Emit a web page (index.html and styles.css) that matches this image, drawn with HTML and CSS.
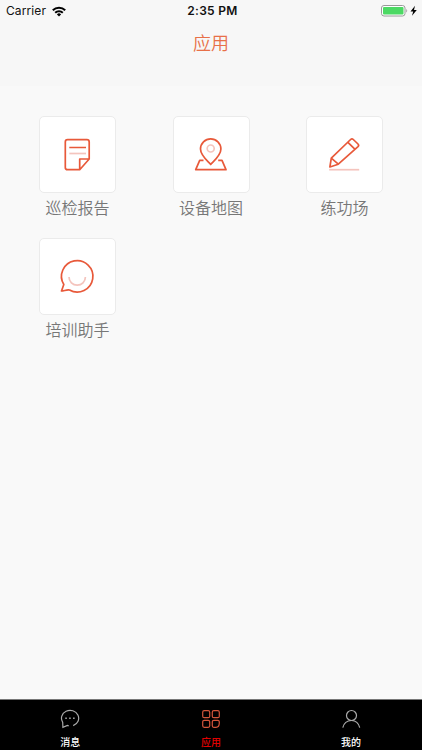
FILE: index.html
```html
<!DOCTYPE html>
<html lang="zh-CN">
<head>
<meta charset="utf-8">
<title>应用</title>
<link rel="stylesheet" href="styles.css">
</head>
<body>
<header class="header">
  <div class="status">
    <div class="carrier">Carrier
      <svg width="14" height="11" viewBox="0 0 14 11" fill="none" stroke="#000" stroke-width="2"><path d="M.8 4.2a8.8 8.8 0 0 1 12.4 0M3.2 6.7a5.4 5.4 0 0 1 7.6 0"/><path d="M7 10.5 4.9 8.4a3 3 0 0 1 4.2 0z" fill="#000" stroke="none"/></svg>
    </div>
    <div class="time">2:35 PM</div>
    <div class="power">
      <svg width="37" height="12" viewBox="0 0 37 12"><rect x=".5" y=".5" width="23.5" height="10.5" rx="2.5" fill="#fff" stroke="#999"/><rect x="2" y="2" width="20.5" height="7.5" rx="1" fill="#4cd964"/><path d="M25.3 4c1.2.5 1.2 3 0 3.5z" fill="#999"/><path d="M34 .8 29.5 6.4h2.7L31 10.8l4.8-5.9H33z"/></svg>
    </div>
  </div>
  <h1 class="title">应用</h1>
</header>
<main class="apps">
  <div class="app">
    <div class="card"><svg class="icon" viewBox="1 1 75 75"><path d="M50.2 43V26q0-2.3-2.3-2.3H28.6q-2.3 0-2.3 2.3v25.4q0 2.3 2.3 2.3h12.1L50.2 43h-9.5v10.7M30.3 31.5H47"/><path class="soft" d="M30.3 37.5H47"/></svg></div>
    <span class="label">巡检报告</span>
  </div>
  <div class="app">
    <div class="card"><svg class="icon" viewBox="1 1 75 75"><path d="M37.7 48.5C33 43.5 27.5 39 27.5 33a10.2 10.2 0 0 1 20.4 0c0 6-5.5 10.5-10.2 15.5zM30.5 44.3h-3.8l-4 9.4h30.3l-4-9.4h-3.8"/><circle class="soft" cx="37.7" cy="32.5" r="3.5"/></svg></div>
    <span class="label">设备地图</span>
  </div>
  <div class="app">
    <div class="card"><svg class="icon" viewBox="1 1 75 75"><path d="M23.9 51 25.3 42.2 44.6 23.5q1.4-1.3 2.7 0l4.7 4.5q1.3 1.3 0 2.6L32.3 48.2zM25.3 42.2l7 6M41.9 26.3l7.2 7"/><path class="soft" d="M23.2 53.7h30"/></svg></div>
    <span class="label">练功场</span>
  </div>
  <div class="app">
    <div class="card"><svg class="icon" viewBox="1 1 75 75"><path d="M22.5 53 24.8 46.5A15.7 15.7 0 1 1 30.5 52C27.5 51.5 25 53 22.5 53z"/><path class="soft" d="M30 39a8.2 8.2 0 0 0 16.4 0"/></svg></div>
    <span class="label">培训助手</span>
  </div>
</main>
<nav class="tabs">
  <div class="tab">
    <svg class="tab-icon" viewBox="0 0 20 20"><path d="M13.2 16.6a8.6 7.9 0 1 0-10.5-3.3l.2 5 4.5-1.9 1.3.5"/><path d="M5.3 9.3h1.5M9.2 9.3h1.5M13.1 9.3h1.5" stroke-width="1.5"/></svg>
    <span>消息</span>
  </div>
  <div class="tab active">
    <svg class="tab-icon" viewBox="0 0 20 20"><rect x="1.7" y="1.7" width="7" height="7" rx="1.5"/><rect x="11.3" y="1.7" width="7" height="7" rx="1.5"/><rect x="1.7" y="11.3" width="7" height="7" rx="1.5"/><path d="M18.3 14v-1.2q0-1.5-1.5-1.5h-4q-1.5 0-1.5 1.5v4q0 1.5 1.5 1.5h2.2q3.3 0 3.3-4.3"/></svg>
    <span>应用</span>
  </div>
  <div class="tab">
    <svg class="tab-icon" viewBox="0 0 20 20"><circle cx="10.5" cy="6.5" r="5"/><path d="M1.800 18.700c1-4.200 3.700-7.200 8.700-7.200s7.200 3 8.200 7.200"/></svg>
    <span>我的</span>
  </div>
</nav>
</body>
</html>
```
FILE: styles.css
```css
* { box-sizing: border-box; }
body {
  margin: 0;
  height: 750px;
  display: flex;
  flex-direction: column;
  background: #f9f9f9;
  font-family: Inter, "Noto Sans CJK SC", sans-serif;
  overflow: hidden;
}
.header { height: 86px; background: #f7f7f7; }
.status {
  display: grid;
  grid-template-columns: 1fr auto 1fr;
  align-items: center;
  height: 22px;
  padding: 0 4px 0 6px;
  font-size: 12px;
  line-height: 22px;
  color: #111;
}
.carrier { display: flex; align-items: center; gap: 6px; letter-spacing: .1px; }
.time { font-weight: 600; letter-spacing: .3px; padding-left: 1px; }
.power { display: flex; justify-content: flex-end; }
.title {
  margin: 8px 0 0;
  text-align: center;
  font-size: 18px;
  line-height: 27px;
  font-weight: 350;
  color: #e87048;
}
.apps {
  flex: 1;
  display: grid;
  grid-template-columns: repeat(3, 77px);
  justify-content: space-between;
  align-content: start;
  row-gap: 16px;
  padding: 30px 39px 0;
}
.app { height: 106px; display: flex; flex-direction: column; align-items: center; }
.card {
  width: 77px;
  height: 77px;
  border: 1px solid #ebebeb;
  border-radius: 5px;
  background: #fff;
}
.icon {
  display: block;
  width: 75px;
  height: 75px;
  fill: none;
  stroke: #e8593a;
  stroke-width: 1.7;
  stroke-linejoin: round;
}
.soft { stroke: #f4c4bd; }
.label {
  margin-top: 3px;
  font-size: 16px;
  line-height: 24px;
  font-weight: 350;
  color: #777;
  white-space: nowrap;
}
.tabs {
  height: 51px;
  display: grid;
  grid-template-columns: repeat(3, 1fr);
  background: #000;
  border-top: 1px solid #777;
}
.tab {
  display: flex;
  flex-direction: column;
  align-items: center;
  padding-top: 9px;
  font-size: 10px;
  line-height: 14px;
  font-weight: 500;
  color: #fff;
}
.tab:last-child { padding-right: 1.5px; }
.tab span { margin-top: 6px; }
.tab-icon { width: 20px; height: 20px; fill: none; stroke: #aaa; stroke-width: 1.2; }
.active { color: #e00000; }
.active .tab-icon { stroke: #d2553b; }
```
